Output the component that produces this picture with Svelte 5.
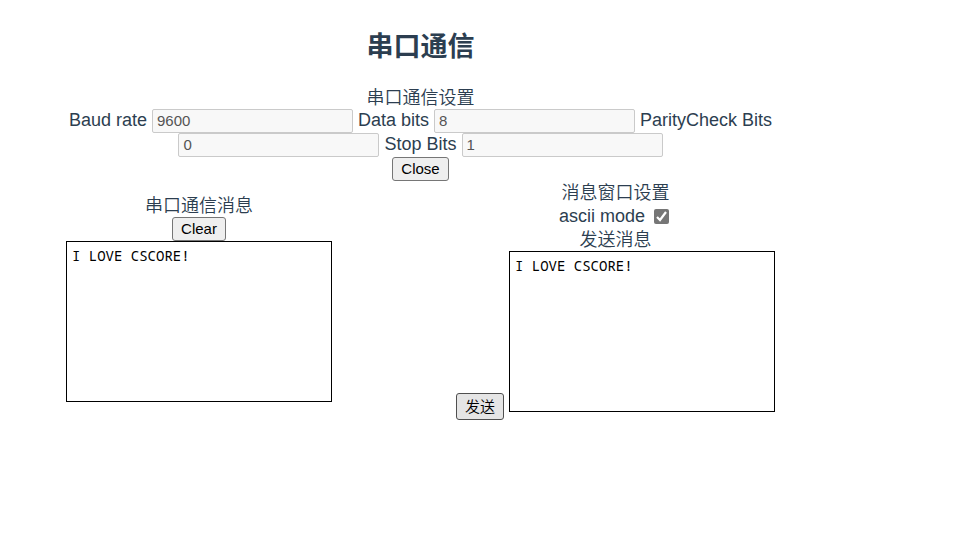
<script>
  let baudRate = $state('9600');
  let dataBits = $state('8');
  let parity = $state('0');
  let stopBits = $state('1');
  let received = $state('I LOVE CSCORE!');
  let outgoing = $state('I LOVE CSCORE!');
  let ascii = $state(true);
</script>

<main>
  <h1>串口通信</h1>

  <section class="settings">
    <div class="title">串口通信设置</div>
    <div>
      <label for="baud">Baud rate</label>
      <input id="baud" class="field" type="text" bind:value={baudRate} disabled />
      <label for="data">Data bits</label>
      <input id="data" class="field" type="text" bind:value={dataBits} disabled />
      <label for="parity">ParityCheck Bits</label>
      <input id="parity" class="field" type="text" bind:value={parity} disabled />
      <label for="stop">Stop Bits</label>
      <input id="stop" class="field" type="text" bind:value={stopBits} disabled />
    </div>
    <div class="row"><button type="button">Close</button></div>
  </section>

  <div class="panels">
    <section class="receive">
      <label class="title" for="received">串口通信消息</label>
      <div class="row"><button type="button" onclick={() => (received = '')}>Clear</button></div>
      <textarea id="received" bind:value={received} spellcheck="false"></textarea>
    </section>

    <section class="send">
      <div class="title">消息窗口设置</div>
      <div class="row mode">
        <label for="ascii">ascii mode</label>
        <input id="ascii" type="checkbox" bind:checked={ascii} disabled />
      </div>
      <label class="title" for="outgoing">发送消息</label>
      <div class="compose">
        <button type="button" class="submit">发送</button>
        <textarea id="outgoing" bind:value={outgoing} spellcheck="false"></textarea>
      </div>
    </section>
  </div>
</main>

<style>
  :global(body) {
    margin: 0;
    background: #fff;
  }

  main {
    max-width: 709px;
    margin-left: 66px;
    padding-top: 29px;
    font: 18px/22px 'Liberation Sans', Arial, 'Noto Sans CJK SC', sans-serif;
    color: #2c3e50;
    text-align: center;
  }

  h1 {
    margin: 0 0 21px;
    font-size: 27px;
    line-height: 36px;
    font-weight: 700;
  }

  .title {
    display: block;
    height: 23px;
    line-height: 24px;
    font-weight: 350;
  }

  .field {
    box-sizing: border-box;
    width: 201px;
    height: 24px;
    margin: 0;
    padding: 0 4px 2px;
    border: 1px solid #cacaca;
    border-radius: 2px;
    background: #f8f8f8;
    color: #545454;
    font: 15px 'Liberation Sans', Arial, sans-serif;
    vertical-align: top;
  }

  .row {
    display: flex;
    justify-content: center;
    height: 24px;
  }

  button {
    box-sizing: border-box;
    height: 24px;
    margin: 0;
    padding: 0 8px 2px;
    border: 1px solid #767676;
    border-radius: 3px;
    background: #efefef;
    color: #000;
    font: 15px 'Liberation Sans', Arial, 'Noto Sans CJK SC', sans-serif;
  }

  .panels {
    display: flex;
    justify-content: space-between;
    align-items: flex-start;
  }

  .receive {
    padding-top: 13px;
  }

  .mode {
    align-items: center;
    gap: 6px;
  }

  .mode input {
    appearance: none;
    width: 15px;
    height: 15px;
    margin: 0 3px;
    border-radius: 2px;
    background: #767676
      url("data:image/svg+xml,%3Csvg xmlns='http://www.w3.org/2000/svg' viewBox='0 0 15 15'%3E%3Cpath d='M3 8l3 3 6-8' fill='none' stroke='white' stroke-width='2.2'/%3E%3C/svg%3E");
  }

  textarea {
    display: block;
    box-sizing: border-box;
    width: 266px;
    height: 161px;
    margin: 0;
    padding: 5px;
    border: 1px solid #000;
    background: #fff;
    color: #000;
    font: 14px/18px 'Noto Sans Mono', 'DejaVu Sans Mono', monospace;
    resize: none;
    outline: none;
  }

  .compose {
    display: flex;
    align-items: flex-end;
    gap: 5px;
    padding-bottom: 8px;
  }

  .submit {
    height: 27px;
    margin-bottom: -8px;
    border-color: #4f4f4f;
    background: #e5e5e5;
    font-weight: 350;
  }
</style>
